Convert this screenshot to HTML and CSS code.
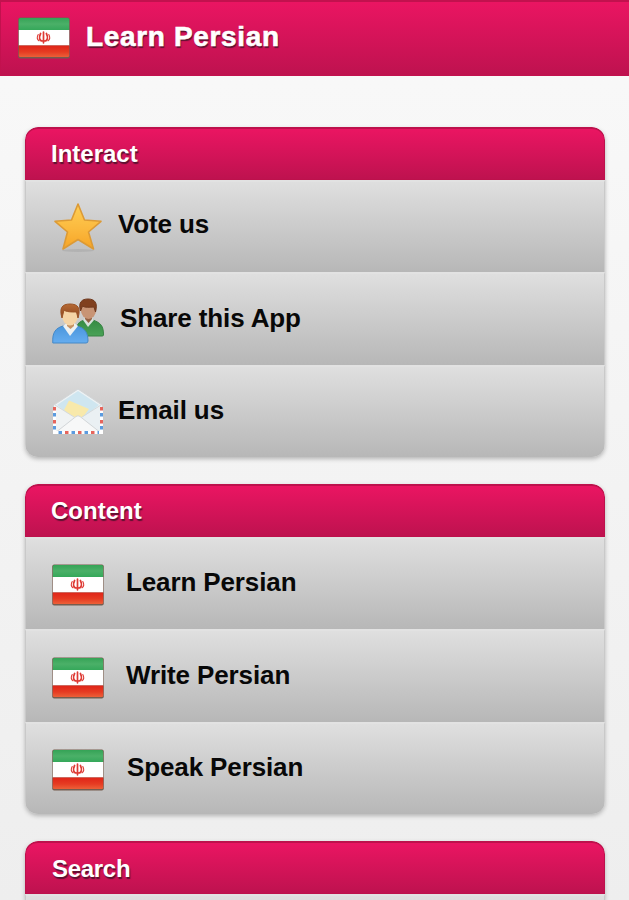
FILE: index.html
```
<!DOCTYPE html>
<html lang="en">
<head>
<meta charset="utf-8">
<title>Learn Persian</title>
<link rel="stylesheet" href="styles.css">
</head>
<body>
<svg class="defs" width="0" height="0" aria-hidden="true">
  <defs>
    <linearGradient id="green" x2="0" y2="1"><stop stop-color="#35a356"/><stop offset=".5" stop-color="#4bb068"/><stop offset="1" stop-color="#35a85a"/></linearGradient>
    <linearGradient id="red" x2="0" y2="1"><stop stop-color="#df2418"/><stop offset=".55" stop-color="#e63b22"/><stop offset="1" stop-color="#ec6038"/></linearGradient>
    <linearGradient id="gold" x2="0" y2="1"><stop stop-color="#ffcf55"/><stop offset=".55" stop-color="#fbb93e"/><stop offset="1" stop-color="#f6a426"/></linearGradient>
    <linearGradient id="blue" x2="0" y2="1"><stop stop-color="#4b96dc"/><stop offset="1" stop-color="#65adf0"/></linearGradient>
    <linearGradient id="jersey" x2="0" y2="1"><stop stop-color="#348b43"/><stop offset="1" stop-color="#4aa257"/></linearGradient>
    <linearGradient id="hair" x2="0" y2="1"><stop stop-color="#b66a35"/><stop offset="1" stop-color="#8c451d"/></linearGradient>
    <symbol id="flag" viewBox="0 0 52 42">
      <rect x=".2" y=".5" width="51.600" height="41" rx="2" fill="#765c4e"/>
      <path d="M.8 13V2.500Q.8 1 2.300 1H49.700Q51.200 1 51.200 2.500V13Z" fill="url(#green)"/>
      <path d="M.8 13H51.200V28.500H.8Z" fill="#fff"/>
      <path d="M.8 28.500H51.200V38.500Q51.200 40 49.700 40H2.300Q.8 40 .8 38.500Z" fill="url(#red)"/>
      <g fill="none" stroke="#de3a34" stroke-width="1.700" stroke-linecap="round"><path d="M25.500 15V25.800M22.600 16.500C20.600 20.500 21.500 24 24.500 24M28.400 16.500C30.400 20.500 29.500 24 26.500 24"/><path stroke-width="1.100" d="M20.200 17.500C18.800 20 19.200 22.500 21 23.800M30.800 17.500C32.200 20 31.800 22.500 30 23.800"/></g>
    </symbol>
  </defs>
</svg>
<header class="topbar">
  <svg class="topbar-flag"><use href="#flag"/></svg>
  <h1>Learn Persian</h1>
</header>
<main class="panels">
  <section class="panel">
    <h2>Interact</h2>
    <ul>
      <li class="vote">
        <svg class="icon" viewBox="0 0 54 52">
          <ellipse cx="26" cy="49.500" rx="16" ry="1.500" fill="#888" opacity=".25"/>
          <path d="M26 3L32.500 19L49 20.300L36.500 31L41.500 48L26 38.500L11 48L15.500 31L3 20.300L19.500 19Z" fill="url(#gold)" stroke="#dc9a35" stroke-width="1.600" stroke-linejoin="round"/>
        </svg>
        <span>Vote us</span>
      </li>
      <li class="share">
        <svg class="icon" viewBox="0 0 54 52">
          <path d="M24 42C23 31 27 27 33 26H41C49 29 51.500 32 51.500 41Q51.500 42 50 42Z" fill="url(#jersey)" stroke="#398344"/>
          <path d="M31 26L36 33L42 26L39 23H34Z" fill="#d8e2dc"/>
          <path d="M33 20H40V25L36.500 29L33 25Z" fill="#946144"/>
          <ellipse cx="36.500" cy="16" rx="7.600" ry="9" fill="#c89475"/>
          <path d="M28.500 17C26 8 30 5 36 5C43 5 46 9 43.500 18L42 13C38 13 33 14 30.500 12Z" fill="#80401f" stroke="#6f381d"/>
          <path d="M.8 49C0 38 4 34 11 32H25C33 34 36 39 36 47Q36 49 34 49Z" fill="url(#blue)" stroke="#4588c6"/>
          <path d="M11 32L18 42L26 32L22 29H15Z" fill="#edf1f2"/>
          <path d="M15 26H22V32L18.500 35L15 32Z" fill="#c69365"/>
          <ellipse cx="18" cy="21.500" rx="8" ry="10" fill="#f5d4a5"/>
          <path d="M10 24C7 14 10 10 18 10C26 10 29 14 26 24L24.500 18C20 18 14 18 12 16Z" fill="url(#hair)" stroke="#9a5224"/>
        </svg>
        <span>Share this App</span>
      </li>
      <li class="email">
        <svg class="icon" viewBox="0 0 54 52">
          <path d="M2 19L26 3L50 19V47H2Z" fill="#eef2f4" stroke="#d2d6d8"/>
          <path d="M5 19L26 5L47 19L31 32H21Z" fill="#cfe6f0"/>
          <path d="M17 14.500L37 23L31 31L21 33L12 24Z" fill="#f8e9ab"/>
          <path d="M2 19L24 32L4 46H2Z" fill="#f0f3f4"/>
          <path d="M50 19L29 32L49 46H50Z" fill="#eaf0f3"/>
          <path d="M3 47L24 30.500Q26 29 28 30.500L49 47Z" fill="#f7f8f8" stroke="#d2d6d8"/>
          <path d="M3 19L22 31M49 19L30 31" stroke="#d5dadc"/>
          <g fill="none" stroke-width="3"><path d="M2.500 21V47M49.500 21V47M1 46.500H51" stroke="#fff"/><path d="M2.500 21V47M49.500 21V47" stroke="#5b9bdf" stroke-dasharray="3.500 9.500" stroke-dashoffset="-6"/><path d="M2.500 21V47M49.500 21V47" stroke="#e6655c" stroke-dasharray="3.500 9.500"/><path d="M13 46.500H49" stroke="#e6655c" stroke-dasharray="3.500 9.500"/><path d="M6.500 46.500H47" stroke="#5b9bdf" stroke-dasharray="3.500 9.500"/></g>
        </svg>
        <span>Email us</span>
      </li>
    </ul>
  </section>
  <section class="panel content">
    <h2>Content</h2>
    <ul>
      <li><svg class="flag"><use href="#flag"/></svg><span>Learn Persian</span></li>
      <li><svg class="flag"><use href="#flag"/></svg><span>Write Persian</span></li>
      <li class="speak"><svg class="flag"><use href="#flag"/></svg><span>Speak Persian</span></li>
    </ul>
  </section>
  <section class="panel search">
    <h2>Search</h2>
    <ul><li></li></ul>
  </section>
</main>
</body>
</html>
```
FILE: styles.css
```
* { box-sizing: border-box; }
body {
  margin: 0;
  height: 900px;
  overflow: hidden;
  background: linear-gradient(#f9f9f9, #eee);
  font-family: "Liberation Sans", Arial, sans-serif;
  font-weight: 700;
}
.defs { position: absolute; }
.topbar {
  height: 76px;
  display: flex;
  align-items: center;
  padding: 0 0 2px 17px;
  border: 1px solid #c2114e;
  border-width: 2px 0 1px 1px;
  background: linear-gradient(#ea1562, #be124f);
}
h1, h2, ul { margin: 0; padding: 0; }
h1, h2 { color: #fff; text-shadow: 1px 2px 1px #5c1230; }
h1 {
  margin: -2px 0 0 16px;
  font-size: 28px;
  line-height: 32px;
  letter-spacing: .65px;
  -webkit-text-stroke: .6px #fff;
}
.topbar-flag { width: 52px; height: 42px; }
.panels {
  display: grid;
  gap: 27px;
  padding: 51px 24px 0 25px;
}
.panel {
  height: 330px;
  border-radius: 13px;
  overflow: hidden;
  box-shadow: 0 2px 4px #b5b5b5;
}
h2 {
  height: 53px;
  padding: 0 25px;
  border: 1px solid #bd114c;
  border-top-width: 2px;
  border-radius: 13px 13px 0 0;
  background: linear-gradient(#ea1562, #be124f);
  font-size: 24px;
  line-height: 50px;
}
ul {
  height: 277px;
  display: grid;
  grid-template-rows: 92px 93px 92px;
  list-style: none;
}
li {
  display: flex;
  align-items: center;
  padding-left: 26px;
  border: 1px solid #c9c9c9;
  border-top: 2px solid #e2e2e2;
  border-bottom: 0;
  background: linear-gradient(#dfdfdf, #b7b7b7);
  color: #080808;
  font-size: 26px;
  line-height: 30px;
  letter-spacing: -.12px;
}
li span { margin: -7px 0 0 12px; }
.icon { width: 54px; height: 52px; }
.share span { margin-left: 14px; margin-top: -4px; }
.email span { margin-top: -5px; }
.flag { width: 52px; height: 42px; margin-top: 2px; }
.content li span { margin: -4px 0 0 22px; }
.content .speak span { margin-left: 23px; }
.search { height: 59px; border-radius: 13px 13px 0 0; }
.search h2 { padding-left: 26px; letter-spacing: -.3px; line-height: 51px; }
```
